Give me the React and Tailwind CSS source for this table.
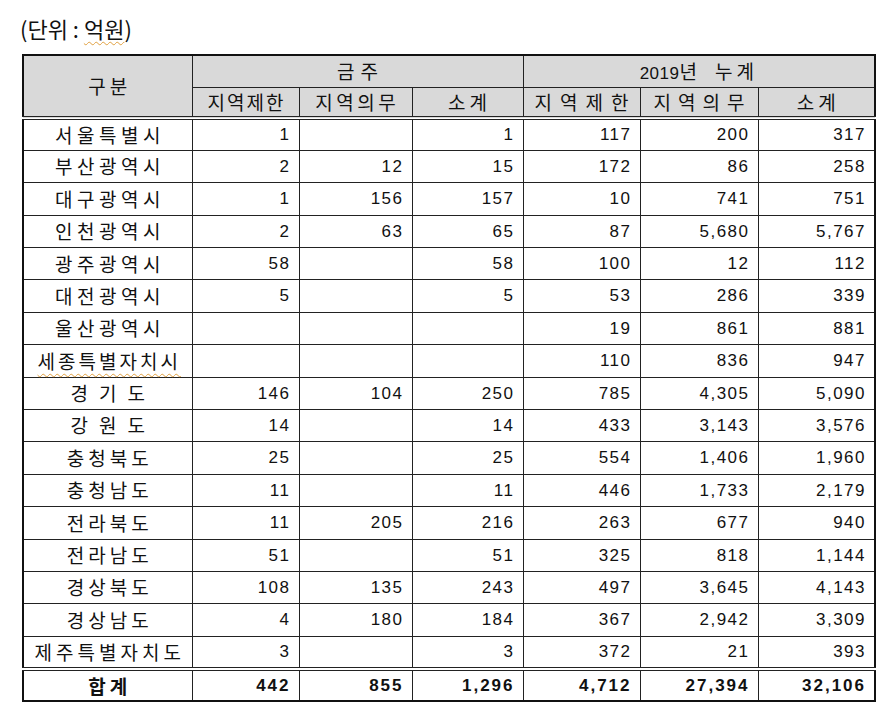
const rows = [
  ["서울특별시", "tracking-[4.5px] pl-[4.5px]", "1", "", "1", "117", "200", "317"],
  ["부산광역시", "tracking-[4.5px] pl-[4.5px]", "2", "12", "15", "172", "86", "258"],
  ["대구광역시", "tracking-[4.5px] pl-[4.5px]", "1", "156", "157", "10", "741", "751"],
  ["인천광역시", "tracking-[4.5px] pl-[4.5px]", "2", "63", "65", "87", "5,680", "5,767"],
  ["광주광역시", "tracking-[4.5px] pl-[4.5px]", "58", "", "58", "100", "12", "112"],
  ["대전광역시", "tracking-[4.5px] pl-[4.5px]", "5", "", "5", "53", "286", "339"],
  ["울산광역시", "tracking-[4.5px] pl-[4.5px]", "", "", "", "19", "861", "881"],
  ["세종특별자치시", "tracking-[3px] pl-[3px]", "", "", "", "110", "836", "947"],
  ["경기도", "tracking-[11px] pl-[11px]", "146", "104", "250", "785", "4,305", "5,090"],
  ["강원도", "tracking-[11px] pl-[11px]", "14", "", "14", "433", "3,143", "3,576"],
  ["충청북도", "tracking-[4px] pl-[4px]", "25", "", "25", "554", "1,406", "1,960"],
  ["충청남도", "tracking-[4px] pl-[4px]", "11", "", "11", "446", "1,733", "2,179"],
  ["전라북도", "tracking-[4px] pl-[4px]", "11", "205", "216", "263", "677", "940"],
  ["전라남도", "tracking-[4px] pl-[4px]", "51", "", "51", "325", "818", "1,144"],
  ["경상북도", "tracking-[4px] pl-[4px]", "108", "135", "243", "497", "3,645", "4,143"],
  ["경상남도", "tracking-[4px] pl-[4px]", "4", "180", "184", "367", "2,942", "3,309"],
  ["제주특별자치도", "tracking-[4px] pl-[4px]", "3", "", "3", "372", "21", "393"],
];

const totals = ["442", "855", "1,296", "4,712", "27,394", "32,106"];

const ko = "font-['Noto_Sans_CJK_KR',sans-serif] text-[19px]";
const cell = "border border-[#222] p-0";
const head = `border border-[#222] p-0 bg-[#d9d9d9] text-center font-normal ${ko}`;
const dbl = "border-b-4 border-double";

export default function App() {
  return (
    <div className="min-h-[716px] bg-white pl-[22px] pt-[13px] text-[#111] font-['Liberation_Sans','Noto_Sans_CJK_KR',sans-serif]">
      <div className="h-[41px] text-[22px] leading-[30px] -ml-[2px] font-['Noto_Sans_CJK_KR',sans-serif]">
        (단위 : <span className="underline decoration-wavy decoration-[#e0a040] decoration-1 underline-offset-[3px]">억원</span>)
      </div>
      <table className="w-[852px] table-fixed border-collapse border-2 border-[#111] text-[17px]">
        <colgroup>
          <col className="w-[169px]" />
          <col className="w-[107px]" />
          <col className="w-[113px]" />
          <col className="w-[111px]" />
          <col className="w-[117px]" />
          <col className="w-[118px]" />
          <col className="w-[117px]" />
        </colgroup>
        <thead>
          <tr className="h-[32px]">
            <th rowSpan={2} className={`${head} ${dbl}`}>
              <span className="tracking-[4px] pl-[4px]">구분</span>
            </th>
            <th colSpan={3} className={head}>
              <span className="tracking-[6px] pl-[6px]">금주</span>
            </th>
            <th colSpan={3} className={head}>
              <span className="font-['Liberation_Sans','Noto_Sans_CJK_KR',sans-serif] text-[17px] tracking-[0.5px]">2019</span>
              <span>년</span>
              <span className="ml-[14px] tracking-[4px] pl-[4px]">누계</span>
            </th>
          </tr>
          <tr className="h-[31px]">
            <th className={`${head} ${dbl}`}><span className="tracking-[2px] pl-[2px]">지역제한</span></th>
            <th className={`${head} ${dbl}`}><span className="tracking-[3.5px] pl-[3.5px]">지역의무</span></th>
            <th className={`${head} ${dbl}`}><span className="tracking-[4px] pl-[4px]">소계</span></th>
            <th className={`${head} ${dbl}`}><span className="tracking-[8px] pl-[8px]">지역제한</span></th>
            <th className={`${head} ${dbl}`}><span className="tracking-[7px] pl-[7px]">지역의무</span></th>
            <th className={`${head} ${dbl}`}><span className="tracking-[4px] pl-[4px]">소계</span></th>
          </tr>
        </thead>
        <tbody>
          {rows.map(([name, spacing, ...nums], i) => {
            const last = i === rows.length - 1;
            return (
              <tr key={name} className={last ? "h-[33px]" : "h-[32.4px]"}>
                <td className={`${cell} ${ko} text-center ${last ? dbl : ""}`}>
                  <span
                    className={`${spacing} ${
                      name === "세종특별자치시"
                        ? "underline decoration-wavy decoration-[#e0a040] decoration-1 underline-offset-[4px]"
                        : ""
                    }`}
                  >
                    {name}
                  </span>
                </td>
                {nums.map((n, j) => (
                  <td key={j} className={`${cell} text-right pr-[8px] tracking-[1.5px] ${last ? dbl : ""}`}>
                    {n}
                  </td>
                ))}
              </tr>
            );
          })}
          <tr className="h-[32px]">
            <td className={`${cell} ${ko} text-center font-bold`}>
              <span className="tracking-[4px] pl-[4px]">합계</span>
            </td>
            {totals.map((n, j) => (
              <td key={j} className={`${cell} text-right pr-[8px] font-bold tracking-[2px]`}>
                {n}
              </td>
            ))}
          </tr>
        </tbody>
      </table>
    </div>
  );
}
